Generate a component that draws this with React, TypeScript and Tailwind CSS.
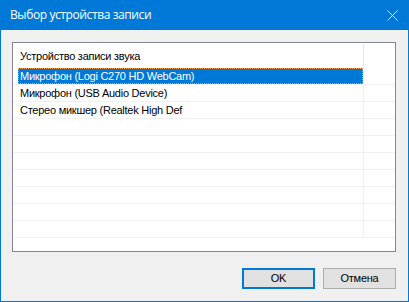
import React from "react";

const rows = [
  "Микрофон (Logi C270 HD WebCam)",
  "Микрофон (USB Audio Device)",
  "Стерео микшер (Realtek High Def",
  "",
  "",
  "",
  "",
  "",
  "",
  "",
];

export default function App() {
  return (
    <div className="w-[409px] h-[302px] flex flex-col border-x border-b border-[#0078d7] bg-[#f0f0f0] font-['Liberation_Sans',sans-serif]">
      {/* Title bar */}
      <div className="h-[30px] -mx-px bg-[#0078d7] flex items-center justify-between pl-[10px] pr-[11px]">
        <span className="text-white text-[12px] tracking-[-0.4px] font-['Open_Sans',sans-serif]">Выбор устройства записи</span>
        <svg width="11" height="11" viewBox="0 0 11 11">
          <path d="M0.5 0.5L10.5 10.5M10.5 0.5L0.5 10.5" stroke="white" strokeWidth="1" />
        </svg>
      </div>

      <div className="flex-1 flex flex-col pl-[11px] pr-[12px] pt-[12px]">
        {/* List view */}
        <div className="h-[210px] border border-[#828790] bg-white flex flex-col overflow-hidden">
          <div className="h-[25px] flex shrink-0">
            <div className="w-[350px] pl-[7px] pt-[8px] text-[11px] tracking-[-0.25px] text-black leading-none">
              Устройство записи звука
            </div>
            <div className="w-px h-full mt-[1px] bg-[#e5e5e5]" />
          </div>
          {rows.map((r, i) => (
            <div key={i} className="h-[17px] flex shrink-0 border-b border-[#f0f0f0]">
              <div className="w-[350px] pl-[5px] flex">
                {i === 0 ? (
                  <div className="flex-1 bg-[#0078d7] outline outline-1 outline-dotted outline-[#f0a050] -outline-offset-1 text-white text-[11px] tracking-[-0.25px] leading-[16px] pl-[2px]">
                    {r}
                  </div>
                ) : (
                  <div className="flex-1 text-black text-[11px] tracking-[-0.25px] leading-[16px] pl-[2px]">{r}</div>
                )}
              </div>
              <div className="w-px bg-[#f0f0f0]" />
            </div>
          ))}
        </div>

        {/* Buttons */}
        <div className="flex justify-end gap-[8px] mt-[16px]">
          <button className="w-[73px] h-[21px] border-2 border-[#0078d7] bg-[#e1e1e1] text-[11px] tracking-[-0.25px] text-black leading-none">
            OK
          </button>
          <button className="w-[73px] h-[21px] border border-[#adadad] bg-[#e1e1e1] text-[11px] tracking-[-0.25px] text-black leading-none">
            Отмена
          </button>
        </div>
      </div>
    </div>
  );
}
